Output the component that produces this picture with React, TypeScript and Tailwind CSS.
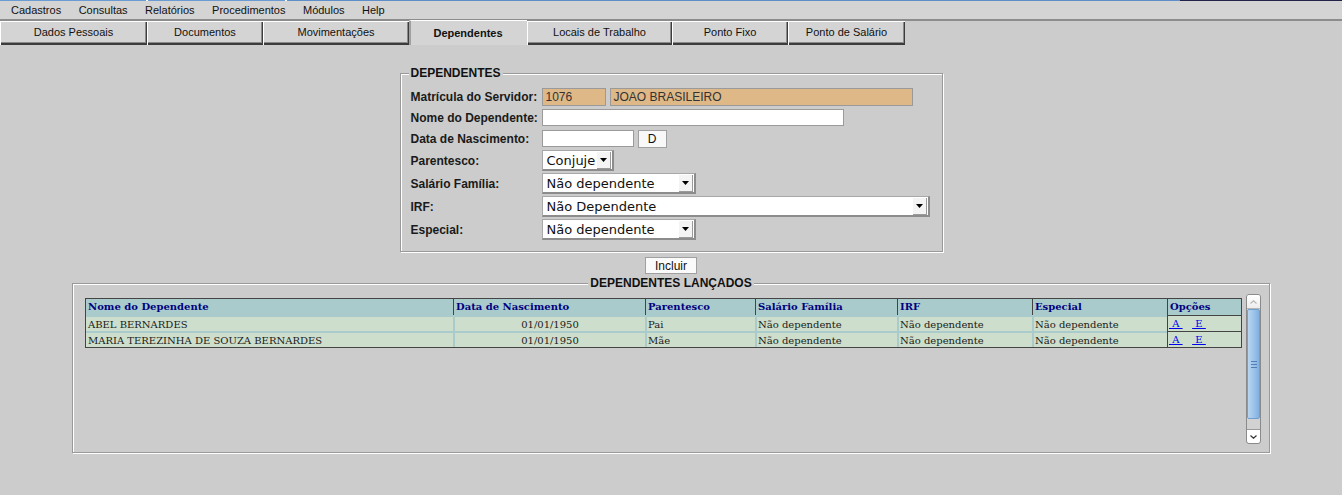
import React from 'react';

const menus = ['Cadastros', 'Consultas', 'Relatórios', 'Procedimentos', 'Módulos', 'Help'];

const tabs = [
  { label: 'Dados Pessoais', w: 'w-[147px]' },
  { label: 'Documentos', w: 'w-[116px]' },
  { label: 'Movimentações', w: 'w-[146px]' },
  { label: 'Dependentes', w: 'w-[118px]', active: true },
  { label: 'Locais de Trabalho', w: 'w-[145px]' },
  { label: 'Ponto Fixo', w: 'w-[116px]' },
  { label: 'Ponto de Salário', w: 'w-[117px]' },
];

const rows = [
  { nome: 'ABEL BERNARDES', data: '01/01/1950', par: 'Pai' },
  { nome: 'MARIA TEREZINHA DE SOUZA BERNARDES', data: '01/01/1950', par: 'Mãe' },
];

const sans = "font-['Liberation_Sans',Arial,sans-serif]";

function Caret() {
  return (
    <svg width="7" height="4" viewBox="0 0 7 4" className="block">
      <path d="M0 0h7L3.5 4z" fill="#000" />
    </svg>
  );
}

// fake windows-classic select box
function Select({ value, w }: { value: string; w: string }) {
  return (
    <div
      className={`flex items-center h-[21px] ${w} bg-white border-l border-t border-[#a8a8a8] border-r-2 border-b-2 border-r-[#8c8c8c] border-b-[#8c8c8c]`}
    >
      <span className="pl-[4px] text-[13px] leading-none text-[#111] font-['DejaVu_Sans',sans-serif] whitespace-nowrap">
        {value}
      </span>
      <div className="ml-auto w-[14px] h-[17px] mr-[1px] bg-[#f4f4f4] shadow-[inset_-1px_-1px_0_#9a9a9a] flex items-center justify-center">
        <Caret />
      </div>
    </div>
  );
}

function Row({ label, h, children }: { label: string; h: string; children: React.ReactNode }) {
  return (
    <div className={`flex items-center ${h}`}>
      <div className="w-[131px] text-[12px] font-bold text-[#1a1a1a] whitespace-nowrap">{label}</div>
      {children}
    </div>
  );
}

function Scrollbar() {
  return (
    <div className="w-[15px] h-[150px] shrink-0 rounded-[3px] border border-[#8a8a8a] bg-[#d4d4d4] flex flex-col overflow-hidden">
      <div className="h-[14px] bg-gradient-to-b from-white to-[#ececec] flex items-center justify-center border-b border-[#b5b5b5]">
        <svg width="7" height="4" viewBox="0 0 7 4">
          <path d="M0.5 3.5L3.5 0.8L6.5 3.5" stroke="#b8b8b8" strokeWidth="1.2" fill="none" />
        </svg>
      </div>
      <div className="h-[110px] bg-gradient-to-r from-[#b9d6f0] via-[#9ec4ea] to-[#80b0e0] border border-[#6f9fd0] rounded-[2px] flex items-center justify-center">
        <svg width="6" height="7" viewBox="0 0 6 7">
          <path d="M0 0.5h6M0 3.5h6M0 6.5h6" stroke="#4f7fb4" strokeWidth="1" />
        </svg>
      </div>
      <div className="flex-1 bg-[#d2d2d2]" />
      <div className="h-[14px] bg-white rounded-b-[2px] border-t border-[#9a9a9a] flex items-center justify-center">
        <svg width="7" height="4" viewBox="0 0 7 4">
          <path d="M0.5 0.5L3.5 3.2L6.5 0.5" stroke="#333" strokeWidth="1.2" fill="none" />
        </svg>
      </div>
    </div>
  );
}

export default function App() {
  return (
    <div className={`w-[1342px] h-[495px] bg-[#cccccc] ${sans} overflow-hidden`}>
      {/* top strip */}
      <div className="flex h-[1px]">
        <div className="w-[146px] bg-[#6b9bd3]" />
        <div className="w-[2px] bg-white" />
        <div className="w-[137px] bg-[#6b9bd3]" />
        <div className="w-[2px] bg-white" />
        <div className="flex-1 bg-[#5f8fc8]" />
        <div className="w-[162px] bg-[#23234a]" />
      </div>

      {/* menu bar */}
      <div className="h-[20px] bg-[#d4d4d4] border-b-2 border-[#8c8c8c] flex items-center pl-[11px] gap-[17.5px] text-[11px] text-[#111]">
        {menus.map((m) => (
          <span key={m}>{m}</span>
        ))}
      </div>

      {/* tabs */}
      <div className="flex h-[24px]">
        {tabs.map((t) =>
          t.active ? (
            <div
              key={t.label}
              className={`${t.w} -mt-[1px] h-[25px] bg-[#d4d4d4] border-l-2 border-[#a0a0a0] border-t border-t-white flex items-center justify-center text-[11px] font-bold text-[#111] pr-[2px]`}
            >
              {t.label}
            </div>
          ) : (
            <div
              key={t.label}
              className={`${t.w} h-[24px] bg-[#d4d4d4] shadow-[inset_1px_1px_0_#ffffff,inset_-1px_-2px_0_#3c3c3c,inset_-2px_-3px_0_#8a8a8a] flex items-center justify-center text-[11px] text-[#111] pb-[1px]`}
            >
              {t.label}
            </div>
          )
        )}
      </div>

      {/* dependentes form */}
      <fieldset className="mt-[21px] mx-auto w-[543px] border border-[#999999] shadow-[inset_1px_1px_0_#ffffff,1px_1px_0_#ffffff] pt-[6px] pb-[10px]">
        <legend className="ml-[8px] px-[2px] bg-[#cccccc] text-[12px] leading-[14px] font-bold text-[#111]">
          DEPENDENTES
        </legend>

        <div className="pl-[10px]">
          <Row label="Matrícula do Servidor:" h="h-[21px]">
            <div className="flex gap-[4px]">
              <div className="w-[64px] h-[18px] bg-[#deb887] border border-[#9a9a9a] px-[3px] text-[12px] leading-[16px] text-[#333]">
                1076
              </div>
              <div className="w-[303px] h-[18px] bg-[#deb887] border border-[#9a9a9a] px-[3px] text-[12px] leading-[16px] text-[#333]">
                JOAO BRASILEIRO
              </div>
            </div>
          </Row>
          <Row label="Nome do Dependente:" h="h-[21px]">
            <div className="w-[302px] h-[17px] bg-white border border-[#9a9a9a]" />
          </Row>
          <Row label="Data de Nascimento:" h="h-[21px]">
            <div className="flex items-center gap-[4px]">
              <div className="w-[92px] h-[17px] bg-white border border-[#9a9a9a]" />
              <div className="w-[29px] h-[18px] bg-[#f8f8f8] border border-[#a0a0a0] flex items-center justify-center text-[12px] text-[#111]">
                D
              </div>
            </div>
          </Row>
          <Row label="Parentesco:" h="h-[23px]">
            <Select value="Conjuje" w="w-[72px]" />
          </Row>
          <Row label="Salário Família:" h="h-[23px]">
            <Select value="Não dependente" w="w-[154px]" />
          </Row>
          <Row label="IRF:" h="h-[23px]">
            <Select value="Não Dependente" w="w-[388px]" />
          </Row>
          <Row label="Especial:" h="h-[23px]">
            <Select value="Não dependente" w="w-[154px]" />
          </Row>
        </div>
      </fieldset>

      <div className="flex justify-center mt-[5px]">
        <div className="w-[52px] h-[17px] bg-[#fafafa] border border-[#a0a0a0] flex items-center justify-center text-[12px] text-[#111]">
          Incluir
        </div>
      </div>

      {/* dependentes lançados */}
      <fieldset className="mt-[2px] mx-auto w-[1196px] border border-[#999999] shadow-[inset_1px_1px_0_#ffffff,1px_1px_0_#ffffff] pt-[4px] pb-[8px]">
        <legend className="mx-auto px-[2px] bg-[#cccccc] text-[12px] leading-[14px] font-bold text-[#111]">
          DEPENDENTES LANÇADOS
        </legend>
        <div className="flex h-[150px] pl-[12px] pr-[8px]">
          <div className="flex-1 pt-[4px] pr-[4px]">
            <table className="w-[1156px] table-fixed border-separate border-spacing-0 border border-[#444444] font-['DejaVu_Serif',serif] text-[10px]">
              <colgroup>
                <col className="w-[367px]" />
                <col className="w-[192px]" />
                <col className="w-[110px]" />
                <col className="w-[142px]" />
                <col className="w-[135px]" />
                <col className="w-[135px]" />
                <col className="w-[74px]" />
              </colgroup>
              <thead>
                <tr>
                  {['Nome do Dependente', 'Data de Nascimento', 'Parentesco', 'Salário Família', 'IRF', 'Especial', 'Opções'].map(
                    (h, i) => (
                      <th
                        key={h}
                        className={`h-[16px] bg-[#a9cbcb] text-[#000080] font-bold text-left px-[2px] p-0 leading-[14px] whitespace-nowrap ${
                          i > 0 ? 'border-l border-[#444444]' : ''
                        }`}
                      >
                        {h}
                      </th>
                    )
                  )}
                </tr>
              </thead>
              <tbody>
                {rows.map((r) => (
                  <tr key={r.nome}>
                    <td className="h-[16px] bg-[#cddfcc] border-t-2 border-[#a9cbcb] px-[2px] text-[#1a1a1a] leading-[13px] whitespace-nowrap">
                      {r.nome}
                    </td>
                    <td className="bg-[#cddfcc] border-t-2 border-l-2 border-[#a9cbcb] px-[2px] text-center text-[#1a1a1a] leading-[13px]">
                      {r.data}
                    </td>
                    <td className="bg-[#cddfcc] border-t-2 border-l-2 border-[#a9cbcb] px-[1px] text-[#1a1a1a] leading-[13px]">
                      {r.par}
                    </td>
                    <td className="bg-[#cddfcc] border-t-2 border-l-2 border-[#a9cbcb] px-[1px] text-[#1a1a1a] leading-[13px] whitespace-nowrap">
                      Não dependente
                    </td>
                    <td className="bg-[#cddfcc] border-t-2 border-l-2 border-[#a9cbcb] px-[1px] text-[#1a1a1a] leading-[13px] whitespace-nowrap">
                      Não dependente
                    </td>
                    <td className="bg-[#cddfcc] border-t-2 border-l-2 border-[#a9cbcb] px-[1px] text-[#1a1a1a] leading-[13px] whitespace-nowrap">
                      Não dependente
                    </td>
                    <td className="bg-[#cddfcc] border-t border-l border-[#444444] px-[1px] leading-[13px] whitespace-nowrap">
                      <a className="text-[#0000ee] underline">&nbsp;A&nbsp;</a>
                      <span>&nbsp;&nbsp;&nbsp;</span>
                      <a className="text-[#0000ee] underline">&nbsp;E&nbsp;</a>
                    </td>
                  </tr>
                ))}
              </tbody>
            </table>
          </div>
          <Scrollbar />
        </div>
      </fieldset>
    </div>
  );
}
